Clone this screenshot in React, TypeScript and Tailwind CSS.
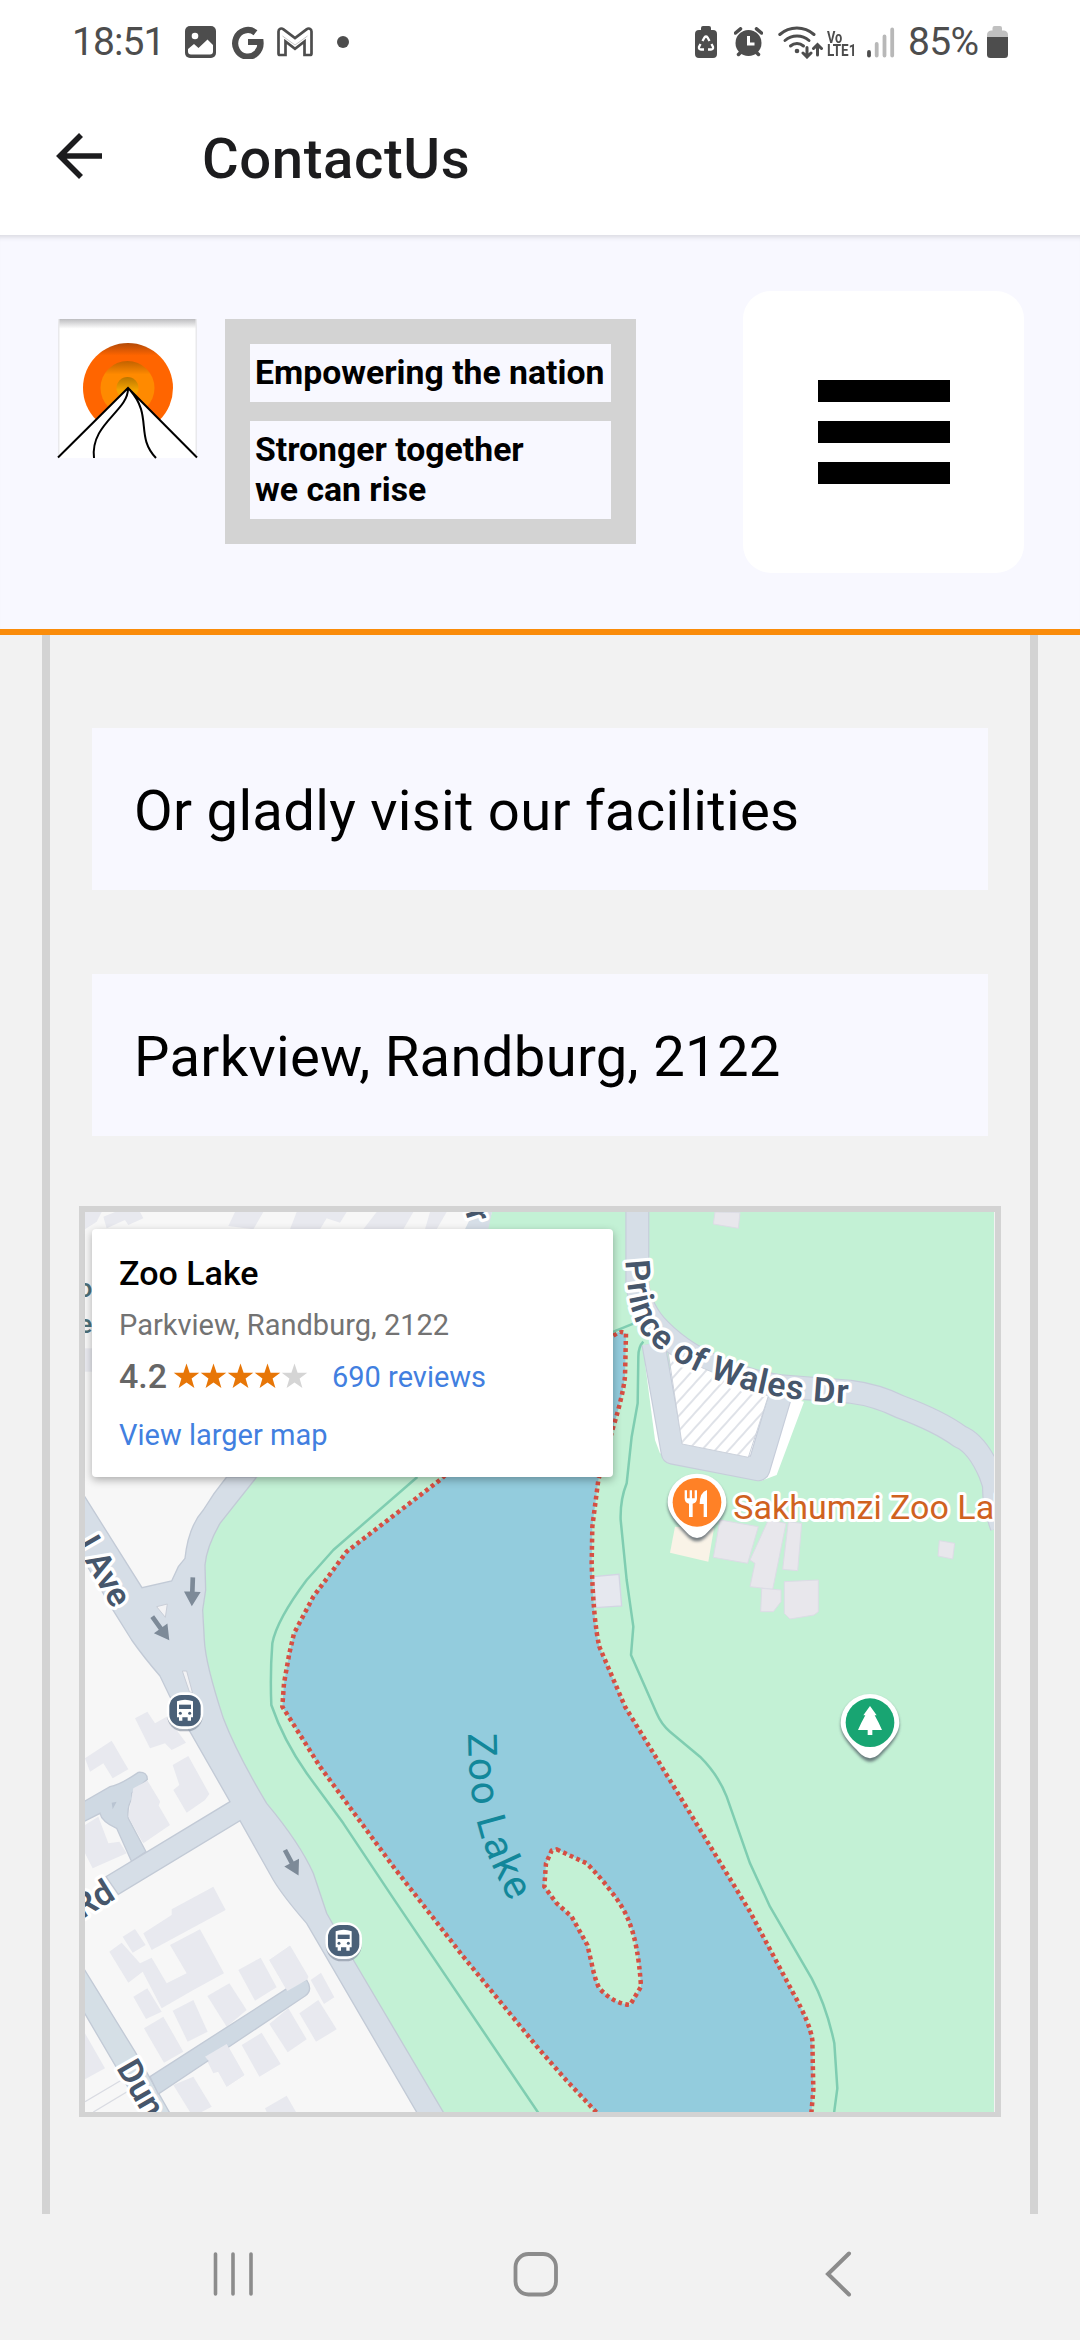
import React from "react";

const INK = "#4d4d4d";

function StatusBar() {
  return (
    <div className="flex h-[84px] items-center pl-[72px] pr-[72px] text-[39px] leading-none text-[#4d4d4d]">
      <span className="w-[96px] whitespace-nowrap pt-px tracking-[-0.900px]">18:51</span>
      <svg className="ml-[17px] h-8 w-[31px]" viewBox="0 0 31 32">
        <rect width="31" height="32" rx="5" fill={INK} />
        <circle cx="10" cy="10" r="3.300" fill="#fff" />
        <path d="M3 23 L9 18 L13.500 22 L22.500 13.500 L28 19 V25.500 Q28 28.500 25 28.500 H6 Q3 28.500 3 25.500Z" fill="#fff" />
      </svg>
      <svg className="ml-[15px] h-[34px] w-[33px]" viewBox="0 0 33 34">
        <path d="M24.500 7.700 A12.700 13.300 0 1 0 29.500 17 H17" fill="none" stroke={INK} strokeWidth="6.200" />
      </svg>
      <svg className="ml-[13px] h-[30px] w-9" viewBox="0 0 36 30">
        <path
          d="M1.500 4.500 C1.500 1.500 4.500 .8 6.500 2.300 L18 11 L29.500 2.300 C31.500 .8 34.500 1.500 34.500 4.500 V26.500 Q34.500 28 33 28 H27.500 V14.500 L18 21.800 L8.500 14.500 V28 H3 Q1.500 28 1.500 26.500Z"
          fill="none"
          stroke={INK}
          strokeWidth="2.700"
        />
        <path d="M5.500 9 L18 18 L30.500 9" fill="none" stroke={INK} strokeWidth="1" opacity=".3" />
      </svg>
      <span className="ml-[24px] size-3 rounded-full bg-[#4d4d4d]" />
      <span className="grow" />
      <svg className="h-8 w-[22px]" viewBox="0 0 22 32">
        <path d="M6 4 V2 Q6 0 8 0 H14 Q16 0 16 2 V4 H18 Q22 4 22 8 V28 Q22 32 18 32 H4 Q0 32 0 28 V8 Q0 4 4 4Z" fill={INK} />
        <path d="M7.500 15 L9.500 11.500 Q11 9.500 12.500 11.500 L14.500 15 M16.500 18 L18 21 Q18.500 23.500 16 23.500 H13 M9 23.500 H6 Q3.500 23.500 4 21 L5.500 18" fill="none" stroke="#fff" strokeWidth="2.300" />
      </svg>
      <svg className="ml-[17px] h-[30px] w-[29px]" viewBox="0 0 29 30">
        <circle cx="14.500" cy="16" r="13" fill={INK} />
        <path d="M1.500 6 L6.500 1.800 M27.500 6 L22.500 1.800 M4.500 27.500 L7 25 M24.500 27.500 L22 25" stroke={INK} strokeWidth="3.500" strokeLinecap="round" />
        <path d="M14.500 9 V17 H20.500" fill="none" stroke="#fff" strokeWidth="3" />
      </svg>
      <svg className="ml-[15px] h-[34px] w-[45px]" viewBox="0 0 45 34">
        <g fill="none" stroke={INK} strokeWidth="3" strokeLinecap="round">
          <path d="M1.800 9.500 A26 26 0 0 1 36 9.500" />
          <path d="M7 15.500 A18 18 0 0 1 31 15.500" />
          <path d="M12.500 21 A10 10 0 0 1 25.500 21" />
          <path d="M29 22.500 V31 M25 28 L29 32 L33 28 M39.500 30 V20 M35.500 23.500 L39.500 19.500 L43.500 23.500" />
        </g>
        <circle cx="19" cy="26" r="2.300" fill={INK} />
      </svg>
      <div className="ml-[4px] flex w-[33px] flex-col items-start whitespace-nowrap pt-[3px] text-[16px] font-bold leading-[13px]">
        <span className="origin-left scale-x-[0.800]">Vo</span>
        <span className="origin-left scale-x-[0.840]">LTE1</span>
      </div>
      <svg className="ml-[7px] h-[31px] w-7" viewBox="0 0 28 31">
        <g strokeWidth="3.800" strokeLinecap="round">
          <path d="M2 25 V28.500" stroke={INK} />
          <path d="M9.700 17 V28.500 M17.500 9.500 V28.500 M25.200 2.500 V28.500" stroke="#b8b8b8" />
        </g>
      </svg>
      <span className="ml-[13px] w-[73px] whitespace-nowrap pt-px tracking-[-0.700px]">85%</span>
      <svg className="ml-[6px] h-8 w-[21px]" viewBox="0 0 21 32">
        <path d="M5.500 4.500 V2 Q5.500 0 7.500 0 H13 Q15 0 15 2 V4.500 H17 Q21 5 21 9 V12 H0 V9 Q0 5 4 4.500Z" fill="#c0c0c0" />
        <path d="M0 11 H21 V28.500 Q21 32 17.500 32 H3.500 Q0 32 0 28.500Z" fill={INK} />
      </svg>
    </div>
  );
}

function Toolbar() {
  return (
    <div className="flex h-[151px] items-center pl-[56px]">
      <svg className="mb-[7px] h-[46px] w-[46px]" viewBox="0 0 46 46">
        <path d="M46 23 H4 M25 2 L4 23 L25 44" fill="none" stroke="#1c1c1e" strokeWidth="5.600" />
      </svg>
      <h1 className="ml-[100px] text-[56.250px] font-medium leading-none tracking-[0.600px] text-[#1c1c1e]">ContactUs</h1>
    </div>
  );
}

function Logo() {
  return (
    <svg className="h-[139px] w-[139px] shrink-0 overflow-visible" viewBox="0 0 139 139">
      <defs>
        <linearGradient id="topShade" x1="0" x2="0" y1="0" y2="1">
          <stop offset="0" stopColor="#bdbdc0" />
          <stop offset=".07" stopColor="#ffffff" />
        </linearGradient>
        <linearGradient id="sunA" x1="0" x2="0" y1="0" y2="1">
          <stop offset="0" stopColor="#b24a08" />
          <stop offset=".14" stopColor="#ff6500" />
        </linearGradient>
        <linearGradient id="sunB" x1="0" x2="0" y1="0" y2="1">
          <stop offset="0" stopColor="#c26200" />
          <stop offset=".25" stopColor="#ff8a00" />
        </linearGradient>
        <linearGradient id="sunC" x1="0" x2="0" y1="0" y2="1">
          <stop offset="0" stopColor="#b87500" />
          <stop offset=".6" stopColor="#f5a300" />
        </linearGradient>
      </defs>
      <rect width="139" height="139" fill="url(#topShade)" />
      <path d="M.75 0 V139 M138.250 0 V136" stroke="#e9e9ec" strokeWidth="1.500" />
      <circle cx="70" cy="69" r="45" fill="url(#sunA)" />
      <circle cx="69.500" cy="69" r="27" fill="url(#sunB)" />
      <circle cx="69.500" cy="69" r="11" fill="url(#sunC)" />
      <path d="M70 69 L139 138 V139 H0 V138Z" fill="#fff" />
      <path d="M0 138.500 L70 69 L139 138.500 M70 70 C70 92 32 105 36 139 M72 71 C95 97 77 117 98 139" fill="none" stroke="#000" strokeWidth="2" />
    </svg>
  );
}

function Banner() {
  return (
    <header className="flex h-[400px] items-start border-b-[6px] border-[#fa8c0a] bg-[#f8f8ff] pl-[58px] pr-[56px] pt-[56px] shadow-[inset_0_6px_5px_-4px_#d8d8df]">
      <div className="pt-[28px]">
        <Logo />
      </div>
      <div className="ml-[28px] mt-[28px] flex h-[225px] w-[411px] flex-col gap-[19px] bg-[#d3d3d3] px-[25px] py-[25px] text-[33.750px] font-bold leading-[40px] text-black">
        <p className="flex h-[58px] items-center whitespace-nowrap bg-[#f8f8ff] pl-[5px]">Empowering the nation</p>
        <p className="flex h-[99px] items-center bg-[#f8f8ff] pl-[5px]">
          Stronger together
          <br />
          we can rise
        </p>
      </div>
      <button className="ml-auto flex h-[282px] w-[281px] flex-col items-center justify-center gap-[19px] rounded-[28px] bg-white">
        <span className="h-[22px] w-[132px] bg-black" />
        <span className="h-[22px] w-[132px] bg-black" />
        <span className="h-[22px] w-[132px] bg-black" />
      </button>
    </header>
  );
}

function InfoBox({ children }: { children: React.ReactNode }) {
  return (
    <div className="flex h-[162px] items-center bg-[#f8f8ff] pl-[42px] pt-[5px] text-[56.250px] leading-none tracking-[0.270px] text-black">
      {children}
    </div>
  );
}

const BUILDINGS: string[] = [
  "75,66 125,66 110,95 75,118",
  "130,80 165,66 240,66 250,85 205,105 195,90 140,115",
  "525,66 610,66 580,118 505,108",
  "710,66 860,66 840,98 800,85 780,118 690,118",
  "950,66 1060,66 1030,118 910,118",
  "1110,66 1160,66 1130,118 1095,118",
  "75,475 96,475 96,545 75,545",
  "225,1585 262,1565 285,1600 320,1580 378,1658 335,1680 315,1660 270,1675",
  "75,1705 155,1652 205,1738 158,1765 130,1720 90,1745",
  "338,1725 385,1698 448,1812 435,1830 380,1868 340,1800 358,1785",
  "220,1795 262,1772 300,1835 295,1845 330,1905 250,1960 205,1880",
  "75,1905 115,1880 145,1960 178,1955 200,1990 98,2035 75,1990",
  "250,2230 335,2175 335,2158 460,2090 497,2160 275,2280",
  "188,2240 225,2217 257,2265 218,2288",
  "330,2265 420,2218 492,2350 400,2400 305,2455 248,2345 205,2378 148,2285 185,2258 240,2320 275,2303 320,2380 380,2350",
  "220,2420 262,2395 305,2465 258,2487",
  "338,2462 400,2430 443,2525 383,2555",
  "442,2418 508,2380 560,2460 500,2510",
  "535,2340 602,2303 650,2392 585,2432",
  "628,2310 690,2267 745,2360 740,2370 682,2403",
  "752,2370 783,2348 823,2422 792,2442",
  "718,2470 775,2430 830,2518 768,2555",
  "628,2502 685,2455 740,2548 683,2587",
  "252,2515 310,2480 370,2585 312,2618",
  "545,2565 605,2528 662,2622 598,2660",
  "435,2600 500,2562 553,2655 500,2690 475,2645 460,2650",
  "340,2685 400,2660 455,2750 425,2766 390,2766",
  "615,2755 680,2717 708,2766 620,2766",
  "75,2530 135,2635 75,2668",
];

const PARK_BUILDINGS: string[] = [
  "1965,66 2040,68 2035,115 1960,102",
  "2638,1052 2684,1060 2678,1107 2634,1098",
  "1980,990 2095,1010 2063,1120 1960,1102",
  "2125,990 2178,1000 2138,1198 2070,1190 2085,1120 2070,1110",
  "2185,995 2225,1000 2213,1142 2168,1138",
  "2105,1195 2163,1200 2163,1235 2140,1265 2102,1265",
  "2173,1175 2275,1170 2275,1265 2262,1275 2190,1287 2173,1270",
];

const LAKE_SHORE =
  "M1170,840 L1145,866 L860,1085 L760,1220 L702,1330 L688,1390 L672,1480 L667,1550 L780,1730 L1000,2030 L1210,2300 L1435,2575 L1520,2672 L1612,2770";
const LAKE_EAST =
  "M1660,437 L1680,425 L1698,430 L1695,560 Q1688,620 1660,710 L1615,870 L1597,1010 L1595,1120 Q1600,1290 1618,1370 L1695,1550 L1860,1820 L2070,2165 L2200,2410 Q2250,2500 2257,2550 L2260,2700 L2254,2770";
const ISLAND =
  "M1490,1978 L1580,2020 Q1620,2060 1650,2100 Q1690,2150 1705,2190 Q1735,2260 1743,2390 L1710,2445 Q1660,2440 1618,2395 Q1605,2370 1595,2320 L1582,2265 L1535,2180 L1490,2140 L1453,2090 L1458,2020 L1475,1982Z";

function BusStop({ x, y }: { x: number; y: number }) {
  return (
    <g transform={`translate(${x} ${y})`}>
      <rect x="-54" y="-50" width="108" height="112" rx="48" fill="#8d97a5" opacity=".7" />
      <rect x="-55" y="-55" width="110" height="110" rx="48" fill="#fff" />
      <rect x="-47" y="-47" width="94" height="94" rx="36" fill="#4a6078" />
      <path d="M-24,-28 Q0,-38 24,-28 V20 H18 V30 H8 V20 H-8 V30 H-18 V20 H-24Z" fill="#fff" />
      <rect x="-18" y="-18" width="36" height="13" fill="#4a6078" />
      <circle cx="-14" cy="8" r="4.500" fill="#4a6078" />
      <circle cx="14" cy="8" r="4.500" fill="#4a6078" />
    </g>
  );
}

function Pin({ x, y, color, children }: { x: number; y: number; color: string; children: React.ReactNode }) {
  return (
    <g transform={`translate(${x} ${y})`}>
      <path d="M-88,0 A88,86 0 1 1 88,0 C88,38 50,72 24,100 Q0,120 -24,100 C-50,72 -88,38 -88,0Z" fill="#4a545e" opacity=".75" transform="translate(0 7)" filter="url(#soft)" />
      <path d="M-88,0 A88,86 0 1 1 88,0 C88,38 50,70 24,97 Q0,117 -24,97 C-50,70 -88,38 -88,0Z" fill="#fff" />
      <circle r="73" fill={color} />
      {children}
    </g>
  );
}

function Arrow({ x, y, r }: { x: number; y: number; r: number }) {
  return (
    <path
      d="M-7,-43 H7 V0 H25 L0,44 L-25,0 H-7Z"
      transform={`translate(${x} ${y}) rotate(${r})`}
      fill="#7d8a98"
    />
  );
}

function MapDrawing() {
  return (
    <svg className="block h-[900px] w-[909px]" viewBox="75 66 2727 2700" fontFamily="Roboto, sans-serif">
      <defs>
        <filter id="soft" x="-20%" y="-20%" width="140%" height="140%">
          <feGaussianBlur stdDeviation="4" />
        </filter>
        <pattern id="hatch" width="30" height="30" patternUnits="userSpaceOnUse" patternTransform="rotate(42)">
          <rect width="30" height="30" fill="#fff" />
          <rect width="6" height="30" fill="#dfe2e8" />
        </pattern>
        <path id="princePath" d="M1696,212 C1702,300 1710,378 1748,430 C1798,492 1878,533 1963,568 C2078,611 2200,637 2420,642" />
        <path id="lakePath" d="M1224,1630 C1224,1720 1230,1825 1256,1915 C1278,1995 1315,2075 1370,2170" />
      </defs>
      <rect x="75" y="66" width="2727" height="2700" fill="#f7f7f7" />

      <path
        d="M1298,60 L1280,118 L590,861 L480,1000 Q440,1070 435,1125 L437,1200 L428,1260 L433,1350 Q436,1420 490,1585 Q530,1690 620,1840 Q720,1960 760,2050 L800,2170 L880,2310 L1150,2770 H2802 V60Z"
        fill="#c3f1d5"
      />

      <g fill="#e8e9ef">
        {BUILDINGS.map((p) => (
          <polygon key={p} points={p} />
        ))}
      </g>

      <g fill="#d6dee7" stroke="#c2cad6" strokeWidth="4">
        <path d="M71,1835 L150,1790 Q180,1785 235,1747 Q262,1745 262,1768 L215,1810 L217,1825 Q200,1850 205,1885 L258,1985 L215,2015 L170,1915 Q125,1895 120,1870 L71,1895Z" fill="#cfd9e3" />
        <path d="M71,2335 L225,2585 L330,2770 H250 L71,2465Z" fill="#d5dfe6" />
        <path d="M270,2660 L685,2393 L740,2370 Q760,2400 735,2418 L295,2712Z" fill="#cfd9e3" />
        <path
          d="M500,861 L590,861 L480,1000 Q440,1070 435,1125 L437,1200 L428,1260 L433,1350 Q436,1420 490,1585 Q530,1690 620,1840 Q720,1960 760,2050 L800,2170 L880,2310 L1152,2770 H1072 L740,2200 Q670,2120 640,2070 L540,1892 L175,2113 L138,2060 L510,1835 L330,1520 L300,1458 Q250,1400 215,1350 L160,1262 L71,1110 V915 L246,1193 L335,1173 L355,1130 L375,1105 Q385,1010 430,960 Q460,910 500,861Z"
        />
      </g>
      <polygon points="628,2310 690,2267 745,2360 740,2370 682,2403" fill="#e8e9ef" />
      <polygon points="435,2600 500,2562 553,2655 500,2690 475,2645" fill="#e8e9ef" />
      <polygon points="220,1795 262,1772 300,1835 250,1960 205,1880" fill="#e8e9ef" />
      <path d="M75,2735 L185,2670 M100,2766 L210,2700" stroke="#d9dbe2" strokeWidth="4" />
      <path d="M290,1250 L322,1242 L316,1282Z M367,1443 L380,1443 L398,1510 L388,1505Z" fill="#f3f3f5" stroke="#c9ced8" strokeWidth="3" />
      <path d="M155,1838 L170,1835 L158,1858Z" fill="#b9c4d2" />
      <path d="M1215,118 L1240,66 H1296 L1285,118Z" fill="#d6dee7" />

      <path d={`${LAKE_SHORE} L2254,2770 L2260,2700 L2257,2550 Q2250,2500 2200,2410 L2070,2165 L1860,1820 L1695,1550 L1618,1370 Q1600,1290 1595,1120 L1597,1010 L1615,870 L1660,710 Q1688,620 1695,560 L1698,430 L1680,425 L1600,450Z`} fill="#93ccdd" />
      <path d={ISLAND} fill="#c3f1d5" />
      <polygon points="1600,1160 1677,1153 1685,1248 1608,1253" fill="#e6e8ef" stroke="#d3d5e3" strokeWidth="4" />
      <g fill="none" stroke="#d64f43" strokeWidth="13.500" strokeDasharray="11.500 10.100">
        <path d={LAKE_SHORE} />
        <path d={LAKE_EAST} />
        <path d={ISLAND} />
      </g>

      <g fill="none" stroke="#7fcdb1" strokeWidth="7.500" strokeLinejoin="round">
        <path d="M1072,861 L820,1080 L740,1170 Q650,1290 637,1360 Q630,1450 634,1545 Q670,1650 740,1750 L850,1900 L1000,2125 L1436,2770" />
        <path d="M1750,455 Q1735,470 1735,500 L1733,640 L1715,740 L1700,880 Q1680,930 1682,990 L1700,1170 L1720,1310 L1713,1395 L1790,1570 Q1805,1605 1830,1625 L1920,1700 Q1975,1755 2000,1820 L2070,2020 L2130,2150 L2255,2365 Q2300,2450 2323,2560 L2332,2695 L2322,2770" />
        <path d="M1655,427 L1722,400" />
      </g>

      <polygon points="1755,520 2232,635 2150,855 2105,872 1800,790 1785,750" fill="#fff" />
      <g fill="none" strokeLinejoin="round">
        <path d="M1732,60 V280 Q1740,360 1800,420 Q1880,500 1990,540 Q2100,585 2180,590 L2370,605 Q2450,615 2520,650 Q2640,695 2700,740 Q2750,760 2790,850 L2802,885 Q2800,940 2825,1010" stroke="#c6cdda" strokeWidth="72" />
        <path d="M1780,460 L1838,788 L2095,838 L2160,620" stroke="#c6cdda" strokeWidth="72" />
        <path d="M1732,60 V280 Q1740,360 1800,420 Q1880,500 1990,540 Q2100,585 2180,590 L2370,605 Q2450,615 2520,650 Q2640,695 2700,740 Q2750,760 2790,850 L2802,885 Q2800,940 2825,1010" stroke="#d6dee7" strokeWidth="65" />
        <path d="M1780,460 L1838,788 L2095,838 L2160,620" stroke="#d6dee7" strokeWidth="65" />
      </g>
      <polygon points="1825,490 2125,618 2065,802 1866,762" fill="url(#hatch)" stroke="#ccd2dc" strokeWidth="3" />

      <g fill="#e8e7ec" stroke="#dddce6" strokeWidth="3">
        {PARK_BUILDINGS.map((p) => (
          <polygon key={p} points={p} />
        ))}
      </g>
      <polygon points="1845,1010 1962,1015 1945,1115 1830,1088" fill="#f9f3e7" />

      <Arrow x={397} y={1205} r={2} />
      <Arrow x={302} y={1315} r={-36} />
      <Arrow x={695} y={2018} r={-28} />
      <BusStop x={375} y={1562} />
      <BusStop x={851} y={2252} />

      <Pin x={1911} y={937} color="#ff8126">
        <path d="M-37,-36 V-12 Q-37,2 -24,4 V44 H-13 V4 Q0,2 0,-12 V-36 H-7 V-12 H-15 V-36 H-22 V-12 H-30 V-36Z M30,-37 Q8,-30 8,5 H20 V44 H30Z" fill="#fff" />
      </Pin>
      <Pin x={2430} y={1598} color="#18a572">
        <path d="M0,-50 L20,-22 H14 L26,0 L36,22 H7 V37 H-7 V22 H-36 L-26,0 L-14,-22 H-20Z" fill="#fff" />
      </Pin>

      <g fill="#46566b" stroke="#fff" strokeWidth="20" strokeLinejoin="round" paintOrder="stroke" fontSize="102" fontWeight="600">
        <text textLength="894" lengthAdjust="spacing">
          <textPath href="#princePath">Prince of Wales Dr</textPath>
        </text>
        <text transform="translate(158 1258) rotate(60)" textAnchor="end">l Ave</text>
        <text transform="translate(170 2124) rotate(-32)" textAnchor="end">Rd</text>
        <text transform="translate(168 2634) rotate(60)">Dun</text>
        <text transform="translate(1216 66) rotate(72)">r</text>
      </g>
      <g fill="#4c6f78" fontSize="80" fontWeight="500">
        <text x="52" y="322">o</text>
        <text x="54" y="428">e</text>
      </g>
      <text fill="#12879a" fontSize="121" textLength="528" lengthAdjust="spacing">
        <textPath href="#lakePath">Zoo Lake</textPath>
      </text>
      <text x="2020" y="986" fontSize="102" fill="#d0621f" stroke="#fff" strokeWidth="18" strokeLinejoin="round" paintOrder="stroke">
        Sakhumzi Zoo Lake
      </text>
    </svg>
  );
}

function Star({ fill }: { fill: string }) {
  return (
    <svg className="h-[27px] w-[27px]" viewBox="0 0 27 27">
      <path d="M13.500 0.500 L16.600 9.700 L26.300 9.800 L18.600 15.600 L21.400 25 L13.500 19.400 L5.600 25 L8.400 15.600 L.7 9.800 L10.400 9.700Z" fill={fill} />
    </svg>
  );
}

function PlaceCard() {
  return (
    <div className="absolute left-[7px] top-[17px] h-[248px] w-[521px] rounded-[4px] bg-white pl-[27px] shadow-[0_3px_8px_rgba(0,0,0,0.3)]">
      <p className="mt-[22px] h-[44px] text-[34px] font-medium leading-[44px] text-black">Zoo Lake</p>
      <p className="mt-[10px] h-[40px] text-[29px] leading-[40px] text-[#737373]">Parkview, Randburg, 2122</p>
      <div className="mt-[9px] flex h-[44px] items-center">
        <span className="w-[54px] text-[34px] font-medium leading-[44px] text-[#666]">4.2</span>
        <span className="flex pt-px">
          <Star fill="#e77607" />
          <Star fill="#e77607" />
          <Star fill="#e77607" />
          <Star fill="#e77607" />
          <Star fill="#d5d5d5" />
        </span>
        <span className="ml-[24px] pt-[3px] text-[29px] leading-[41px] text-[#427fe0]">690 reviews</span>
      </div>
      <p className="mt-[17px] h-[40px] text-[29px] leading-[40px] text-[#427fe0]">View larger map</p>
    </div>
  );
}

function NavBar() {
  return (
    <nav className="flex h-[126px] items-start bg-[#f2f2f2] pl-[213px] pt-[37px]">
      <svg className="h-[46px] w-[40px]" viewBox="0 0 40 46">
        <path d="M2.500 3 V43 M20 3 V43 M38 3 V43" stroke="#8c8c8c" strokeWidth="3.600" strokeLinecap="round" />
      </svg>
      <svg className="ml-[260px] h-[46px] w-[46px]" viewBox="0 0 46 46">
        <rect x="2.500" y="3" width="40.500" height="40.500" rx="13" fill="none" stroke="#8c8c8c" strokeWidth="3.800" />
      </svg>
      <svg className="ml-[266px] h-[46px] w-[27px]" viewBox="0 0 27 46">
        <path d="M24 2.500 L3 23 L24 43.500" fill="none" stroke="#8c8c8c" strokeWidth="4" strokeLinecap="round" />
      </svg>
    </nav>
  );
}

export default function App() {
  return (
    <div className="flex h-[2340px] w-[1080px] flex-col overflow-hidden bg-white font-['Roboto',sans-serif]">
      <StatusBar />
      <Toolbar />
      <Banner />
      <main className="flex h-[1579px] bg-[#f2f2f2] px-[42px]">
        <section className="w-[996px] border-x-8 border-[#d3d3d3] px-[29px] pt-[93px]">
          <div className="flex flex-col gap-[84px] px-[13px]">
            <InfoBox>Or gladly visit our facilities</InfoBox>
            <InfoBox>Parkview, Randburg, 2122</InfoBox>
          </div>
          <div className="relative mt-[70px] h-[911px] border-[6px] border-b-[5px] border-[#d3d3d3]">
            <MapDrawing />
            <PlaceCard />
          </div>
        </section>
      </main>
      <NavBar />
    </div>
  );
}
